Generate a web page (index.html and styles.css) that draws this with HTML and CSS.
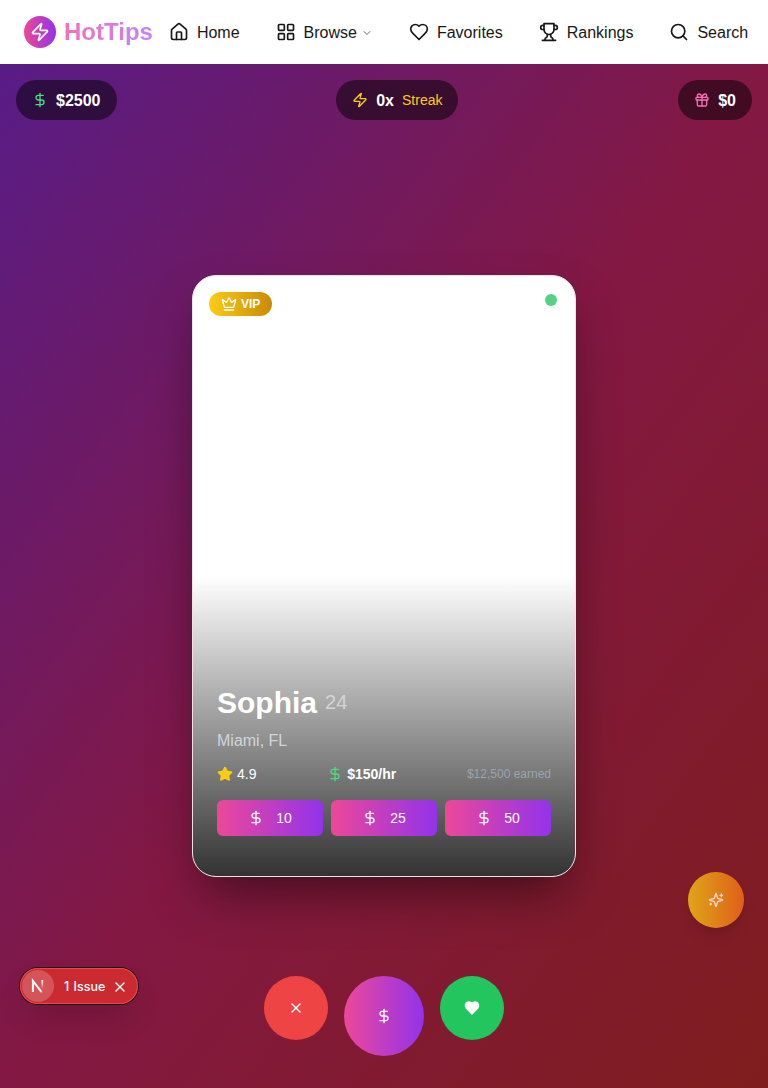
FILE: index.html
```html
<!DOCTYPE html>
<html lang="en">
<head>
<meta charset="utf-8">
<title>HotTips</title>
<link rel="stylesheet" href="styles.css">
</head>
<body>
<svg class="sprite" aria-hidden="true">
  <symbol id="zap" viewBox="0 0 24 24"><path d="M4 14a1 1 0 0 1-.78-1.63l9.9-10.2a.5.5 0 0 1 .86.46l-1.92 6.02A1 1 0 0 0 13 10h7a1 1 0 0 1 .78 1.63l-9.9 10.2a.5.5 0 0 1-.86-.46l1.92-6.02A1 1 0 0 0 11 14z"/></symbol>
  <symbol id="house" viewBox="0 0 24 24"><path d="M15 21v-8a1 1 0 0 0-1-1h-4a1 1 0 0 0-1 1v8"/><path d="M3 10a2 2 0 0 1 .709-1.528l7-5.999a2 2 0 0 1 2.582 0l7 5.999A2 2 0 0 1 21 10v9a2 2 0 0 1-2 2H5a2 2 0 0 1-2-2z"/></symbol>
  <symbol id="grid" viewBox="0 0 24 24"><rect width="7" height="7" x="3" y="3" rx="1"/><rect width="7" height="7" x="14" y="3" rx="1"/><rect width="7" height="7" x="14" y="14" rx="1"/><rect width="7" height="7" x="3" y="14" rx="1"/></symbol>
  <symbol id="chevron" viewBox="0 0 24 24"><path d="m6 9 6 6 6-6"/></symbol>
  <symbol id="heart" viewBox="0 0 24 24"><path d="M19 14c1.49-1.46 3-3.21 3-5.5A5.5 5.5 0 0 0 16.5 3c-1.76 0-3 .5-4.5 2-1.5-1.5-2.74-2-4.5-2A5.5 5.5 0 0 0 2 8.5c0 2.3 1.5 4.05 3 5.5l7 7Z"/></symbol>
  <symbol id="trophy" viewBox="0 0 24 24"><path d="M6 9H4.5a2.5 2.5 0 0 1 0-5H6"/><path d="M18 9h1.5a2.5 2.5 0 0 0 0-5H18"/><path d="M4 22h16"/><path d="M10 14.66V17c0 .55-.47.98-.97 1.21C7.85 18.75 7 20.24 7 22"/><path d="M14 14.66V17c0 .55.47.98.97 1.21C16.15 18.75 17 20.24 17 22"/><path d="M18 2H6v7a6 6 0 0 0 12 0V2Z"/></symbol>
  <symbol id="search" viewBox="0 0 24 24"><circle cx="11" cy="11" r="8"/><path d="m21 21-4.3-4.3"/></symbol>
  <symbol id="dollar" viewBox="0 0 24 24"><path d="M12 2v20"/><path d="M17 5H9.5a3.5 3.5 0 0 0 0 7h5a3.5 3.5 0 0 1 0 7H6"/></symbol>
  <symbol id="gift" viewBox="0 0 24 24"><rect x="3" y="8" width="18" height="4" rx="1"/><path d="M12 8v13"/><path d="M19 12v7a2 2 0 0 1-2 2H7a2 2 0 0 1-2-2v-7"/><path d="M7.5 8a2.5 2.5 0 0 1 0-5A4.8 8 0 0 1 12 8a4.8 8 0 0 1 4.5-5 2.5 2.5 0 0 1 0 5"/></symbol>
  <symbol id="crown" viewBox="0 0 24 24"><path d="M11.562 3.266a.5.5 0 0 1 .876 0L15.39 8.87a1 1 0 0 0 1.516.294L21.183 5.5a.5.5 0 0 1 .798.519l-2.834 10.246a1 1 0 0 1-.956.734H5.81a1 1 0 0 1-.957-.734L2.02 6.02a.5.5 0 0 1 .798-.519l4.276 3.664a1 1 0 0 0 1.516-.294z"/><path d="M5 21h14"/></symbol>
  <symbol id="star" viewBox="0 0 24 24"><path d="M11.525 2.295a.53.53 0 0 1 .95 0l2.31 4.679a2.123 2.123 0 0 0 1.595 1.16l5.166.756a.53.53 0 0 1 .294.904l-3.736 3.638a2.123 2.123 0 0 0-.611 1.878l.882 5.14a.53.53 0 0 1-.771.56l-4.618-2.428a2.122 2.122 0 0 0-1.973 0L6.396 21.01a.53.53 0 0 1-.77-.56l.881-5.139a2.122 2.122 0 0 0-.611-1.879L2.16 9.795a.53.53 0 0 1 .294-.906l5.165-.755a2.122 2.122 0 0 0 1.597-1.16z"/></symbol>
  <symbol id="x" viewBox="0 0 24 24"><path d="M18 6 6 18"/><path d="m6 6 12 12"/></symbol>
  <symbol id="sparkles" viewBox="0 0 24 24"><path d="M9.937 15.5A2 2 0 0 0 8.5 14.063l-6.135-1.582a.5.5 0 0 1 0-.962L8.5 9.936A2 2 0 0 0 9.937 8.5l1.582-6.135a.5.5 0 0 1 .963 0L14.063 8.5A2 2 0 0 0 15.5 9.937l6.135 1.581a.5.5 0 0 1 0 .964L15.5 14.063a2 2 0 0 0-1.437 1.437l-1.582 6.135a.5.5 0 0 1-.963 0z"/><path d="M20 3v4"/><path d="M22 5h-4"/><path d="M4 17v2"/><path d="M5 18H3"/></symbol>
</svg>

<header class="header">
  <a class="brand"><span class="brand-mark"><svg class="icon icon-md"><use href="#zap"/></svg></span><span class="brand-name">HotTips</span></a>
  <nav class="nav">
    <a class="nav-link"><svg class="icon icon-md"><use href="#house"/></svg><span class="label">Home</span></a>
    <a class="nav-link"><svg class="icon icon-md"><use href="#grid"/></svg><span class="label">Browse</span><svg class="icon chevron"><use href="#chevron"/></svg></a>
    <a class="nav-link"><svg class="icon icon-md"><use href="#heart"/></svg><span class="label">Favorites</span></a>
    <a class="nav-link"><svg class="icon icon-md"><use href="#trophy"/></svg><span class="label">Rankings</span></a>
    <a class="nav-link"><svg class="icon icon-md"><use href="#search"/></svg><span class="label">Search</span></a>
  </nav>
</header>

<main class="stage">
  <section class="stats">
    <div class="pill"><svg class="icon green"><use href="#dollar"/></svg><b class="label">$2500</b></div>
    <div class="pill"><svg class="icon yellow"><use href="#zap"/></svg><b class="label">0x</b><span class="streak">Streak</span></div>
    <div class="pill"><svg class="icon pink"><use href="#gift"/></svg><b class="label">$0</b></div>
  </section>

  <article class="card">
    <div class="card-top">
      <span class="vip"><svg class="icon"><use href="#crown"/></svg>VIP</span>
      <span class="online"></span>
    </div>
    <div class="card-body">
      <h2 class="name"><span class="label">Sophia</span><span class="age">24</span></h2>
      <p class="place">Miami, FL</p>
      <div class="facts">
        <span class="fact"><svg class="icon star"><use href="#star"/></svg>4.9</span>
        <span class="fact"><svg class="icon green"><use href="#dollar"/></svg><b>$150/hr</b></span>
        <span class="earned">$12,500 earned</span>
      </div>
      <div class="tips">
        <button class="tip"><svg class="icon"><use href="#dollar"/></svg>10</button>
        <button class="tip"><svg class="icon"><use href="#dollar"/></svg>25</button>
        <button class="tip"><svg class="icon"><use href="#dollar"/></svg>50</button>
      </div>
    </div>
  </article>

  <div class="actions">
    <button class="action pass"><svg class="icon"><use href="#x"/></svg></button>
    <button class="action send"><svg class="icon"><use href="#dollar"/></svg></button>
    <button class="action like"><svg class="icon filled"><use href="#heart"/></svg></button>
  </div>
</main>

<button class="boost"><svg class="icon"><use href="#sparkles"/></svg></button>

<div class="issue">
  <span class="issue-mark">
    <svg width="16" height="16" viewBox="0 0 16 16" fill="none">
      <defs><linearGradient id="fade-a" x1="8" y1="8" x2="13" y2="15" gradientUnits="userSpaceOnUse"><stop stop-color="#fff"/><stop offset=".6" stop-color="#fff"/><stop offset="1" stop-color="#fff" stop-opacity="0"/></linearGradient><linearGradient id="fade-b" x1="0" y1="2" x2="0" y2="11" gradientUnits="userSpaceOnUse"><stop stop-color="#fff"/><stop offset="1" stop-color="#fff" stop-opacity="0"/></linearGradient></defs>
      <path d="M2.9 14V3L12 14.6" stroke="url(#fade-a)" stroke-width="2"/>
      <path d="M12.3 2V10.5" stroke="url(#fade-b)" stroke-width="1.8"/>
    </svg>
  </span>
  <span class="issue-text">1 Issue</span>
  <svg class="icon issue-close"><use href="#x"/></svg>
</div>
</body>
</html>
```

FILE: styles.css
```css
* { box-sizing: border-box; margin: 0; padding: 0; }

body {
  height: 1088px;
  overflow: hidden;
  position: relative;
  font: 16px/24px "Liberation Sans", Arial, sans-serif;
  color: #fff;
}

button { border: 0; font: inherit; color: inherit; }

.sprite { position: absolute; width: 0; height: 0; }

.icon {
  width: 16px;
  height: 16px;
  flex: none;
  display: block;
  fill: none;
  stroke: currentColor;
  stroke-width: 2;
  stroke-linecap: round;
  stroke-linejoin: round;
}
.icon-md { width: 20px; height: 20px; }
.filled { fill: currentColor; }
.green { color: #4ade80; }
.yellow { color: #facc15; }
.pink { color: #f472b6; }
.star { color: #facc15; fill: currentColor; }

/* optical centring of larger text beside icons */
.label { padding-top: 2px; }

.header {
  height: 64px;
  padding-left: 24px;
  display: flex;
  align-items: center;
  background: #fff;
}
.brand { display: flex; align-items: center; gap: 8px; flex: none; }
.brand-mark {
  width: 32px;
  height: 32px;
  border-radius: 50%;
  display: grid;
  place-items: center;
  background: linear-gradient(to right, #ec4899, #9333ea);
}
.brand-name {
  font-size: 24px;
  line-height: 32px;
  font-weight: 700;
  color: transparent;
  background: linear-gradient(to right, #f472b6, #c084fc);
  background-clip: text;
  -webkit-background-clip: text;
}
.nav { display: flex; gap: 4px; flex: none; color: #171717; }
.nav-link { display: flex; align-items: center; gap: 8px; padding: 8px 16px; }
.chevron { width: 12px; height: 12px; margin: 2px 0 0 -4px; opacity: .65; }

.stage {
  height: 1024px;
  display: grid;
  grid-template: 100% / 100%;
  background: linear-gradient(to bottom right, #581c87, #831843, #7f1d1d);
}
.stage > * { grid-area: 1 / 1; }

.stats {
  align-self: start;
  padding: 16px;
  display: flex;
  justify-content: space-between;
}
.pill {
  height: 40px;
  padding: 0 16px;
  display: flex;
  align-items: center;
  gap: 8px;
  border-radius: 20px;
  background: rgba(0, 0, 0, .5);
}
.streak { font-size: 14px; color: #facc15; }

.card {
  place-self: center;
  width: 384px;
  height: 602px;
  display: flex;
  flex-direction: column;
  justify-content: space-between;
  overflow: hidden;
  border: 1px solid #e5e5e5;
  border-radius: 24px;
  background: linear-gradient(to top, rgba(0, 0, 0, .8), transparent 50%) #fff;
  box-shadow: 0 25px 50px -12px rgba(0, 0, 0, .5);
}
.card-top { display: flex; justify-content: space-between; padding: 16px 18px 0 16px; }
.vip {
  height: 24px;
  padding: 0 12px;
  display: flex;
  align-items: center;
  gap: 4px;
  border-radius: 12px;
  font-size: 12px;
  font-weight: 700;
  background: linear-gradient(to right, #facc15, #ca8a04);
}
.online { width: 12px; height: 12px; margin-top: 2px; border-radius: 50%; background: #55d283; }

.card-body { padding: 0 24px 40px; }
.name { display: flex; align-items: center; gap: 8px; height: 36px; font-size: 30px; line-height: 36px; margin-bottom: 9px; }
.age { font-size: 20px; font-weight: 400; color: #d1d5db; }
.place { color: #d1d5db; margin-bottom: 11px; }
.facts {
  display: flex;
  justify-content: space-between;
  align-items: center;
  font-size: 14px;
  line-height: 20px;
  margin-bottom: 16px;
}
.fact { display: flex; align-items: center; gap: 4px; }
.earned { font-size: 12px; color: #9ca3af; }
.tips { display: grid; grid-template-columns: repeat(3, 1fr); gap: 8px; }
.tip {
  height: 36px;
  display: flex;
  align-items: center;
  justify-content: center;
  gap: 12px;
  border-radius: 6px;
  font-size: 14px;
  background: linear-gradient(to right, #ec4899, #9333ea);
}

.actions { place-self: end center; display: flex; gap: 16px; padding-bottom: 32px; }
.action { width: 64px; height: 64px; border-radius: 50%; display: grid; place-items: center; }
.pass { background: #ef4444; }
.send { width: 80px; height: 80px; background: linear-gradient(to right, #ec4899, #9333ea); }
.like { background: #22c55e; }

.boost {
  position: absolute;
  right: 24px;
  bottom: 160px;
  width: 56px;
  height: 56px;
  border-radius: 50%;
  display: grid;
  place-items: center;
  background: linear-gradient(to right, #dfa518, #df5f1a);
  color: #f5dcd0;
  box-shadow: 0 10px 15px -3px rgba(0, 0, 0, .1), 0 4px 6px -4px rgba(0, 0, 0, .1);
}

.issue {
  position: absolute;
  left: 20px;
  bottom: 84px;
  width: 118px;
  height: 36px;
  padding-left: 2px;
  display: flex;
  align-items: center;
  border-radius: 18px;
  background: #ca2a30;
  box-shadow: 0 0 0 1px #171717, inset 0 0 0 1px #e5484d, 0 16px 32px -8px rgba(0, 0, 0, .24);
}
.issue-mark {
  width: 32px;
  height: 32px;
  border-radius: 50%;
  display: grid;
  place-items: center;
  background: rgba(255, 255, 255, .2);
}
.issue-text { margin-left: 10px; padding-top: 1px; width: 42px; white-space: nowrap; font: 500 12.5px/20px Inter, sans-serif; word-spacing: 1px; }
.issue-close { margin-left: 6px; margin-top: 1px; }
```
